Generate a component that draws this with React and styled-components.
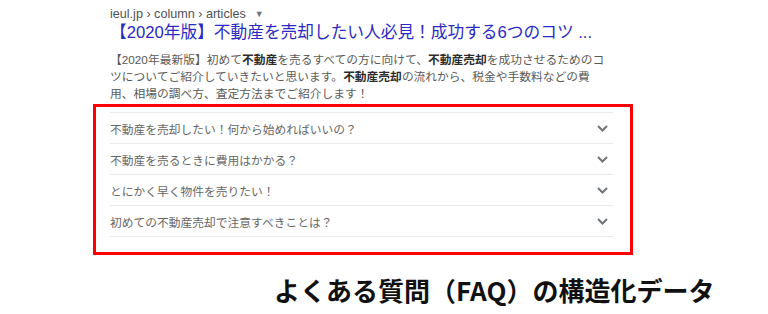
import React from 'react';
import styled, { createGlobalStyle } from 'styled-components';

const GlobalStyle = createGlobalStyle`
  body {
    margin: 0;
    background: #fff;
    font-family: "Liberation Sans", "Noto Sans CJK JP", sans-serif;
  }
`;

const Page = styled.div`
  width: 768px;
  height: 314px;
  overflow: hidden;
  background: #fff;
`;

const Result = styled.div`
  padding: 5px 0 0 110px;
`;

const Crumb = styled.div`
  font-size: 12.6px;
  line-height: 18px;
  color: #4d5156;
  display: flex;
  align-items: center;
  gap: 4px;
  .arrow {
    font-size: 9px;
    color: #70757a;
    margin-left: 5px;
  }
`;

const Title = styled.div`
  font-size: 16.7px;
  line-height: 20px;
  color: #2a2ac4;
  white-space: nowrap;
`;

const Snippet = styled.div`
  margin-top: 8px;
  font-size: 11.75px;
  line-height: 17px;
  color: #5a5a5a;
  white-space: nowrap;
  b {
    color: #2c2c2c;
    font-weight: 700;
  }
`;

const FaqBox = styled.div`
  margin: 2px 0 0 93px;
  width: 540px;
  height: 151px;
  box-sizing: border-box;
  border: 3px solid #ff0000;
  padding: 5px 17px 0 14px;
`;

const FaqRow = styled.div`
  height: 30px;
  display: flex;
  align-items: center;
  justify-content: space-between;
  padding-right: 5px;
  border-top: 1px solid #ebebeb;
  &:last-child {
    border-bottom: 1px solid #ebebeb;
  }
`;

const FaqText = styled.span`
  font-size: 11.75px;
  color: #666;
`;

const Caption = styled.div`
  margin-top: 20px;
  padding-left: 274px;
  font-family: "Noto Sans CJK JP", sans-serif;
  font-size: 26px;
  line-height: 30px;
  font-weight: 700;
  color: #111;
  white-space: nowrap;
`;

const Chevron = () => (
  <svg width="11" height="7" viewBox="0 0 11 7" fill="none">
    <polyline points="1,1 5.5,5.5 10,1" stroke="#70757a" strokeWidth="2" />
  </svg>
);

const questions = [
  '不動産を売却したい！何から始めればいいの？',
  '不動産を売るときに費用はかかる？',
  'とにかく早く物件を売りたい！',
  '初めての不動産売却で注意すべきことは？',
];

const App = () => (
  <Page>
    <GlobalStyle />
    <Result>
      <Crumb>
        <span>ieul.jp › column › articles</span>
        <span className="arrow">▼</span>
      </Crumb>
      <Title>【2020年版】不動産を売却したい人必見！成功する6つのコツ ...</Title>
      <Snippet>
        【2020年最新版】初めて<b>不動産</b>を売るすべての方に向けて、<b>不動産売却</b>を成功させるためのコ
        <br />
        ツについてご紹介していきたいと思います。<b>不動産売却</b>の流れから、税金や手数料などの費
        <br />
        用、相場の調べ方、査定方法までご紹介します！
      </Snippet>
    </Result>
    <FaqBox>
      {questions.map((q) => (
        <FaqRow key={q}>
          <FaqText>{q}</FaqText>
          <Chevron />
        </FaqRow>
      ))}
    </FaqBox>
    <Caption>よくある質問（FAQ）の構造化データ</Caption>
  </Page>
);

export default App;
